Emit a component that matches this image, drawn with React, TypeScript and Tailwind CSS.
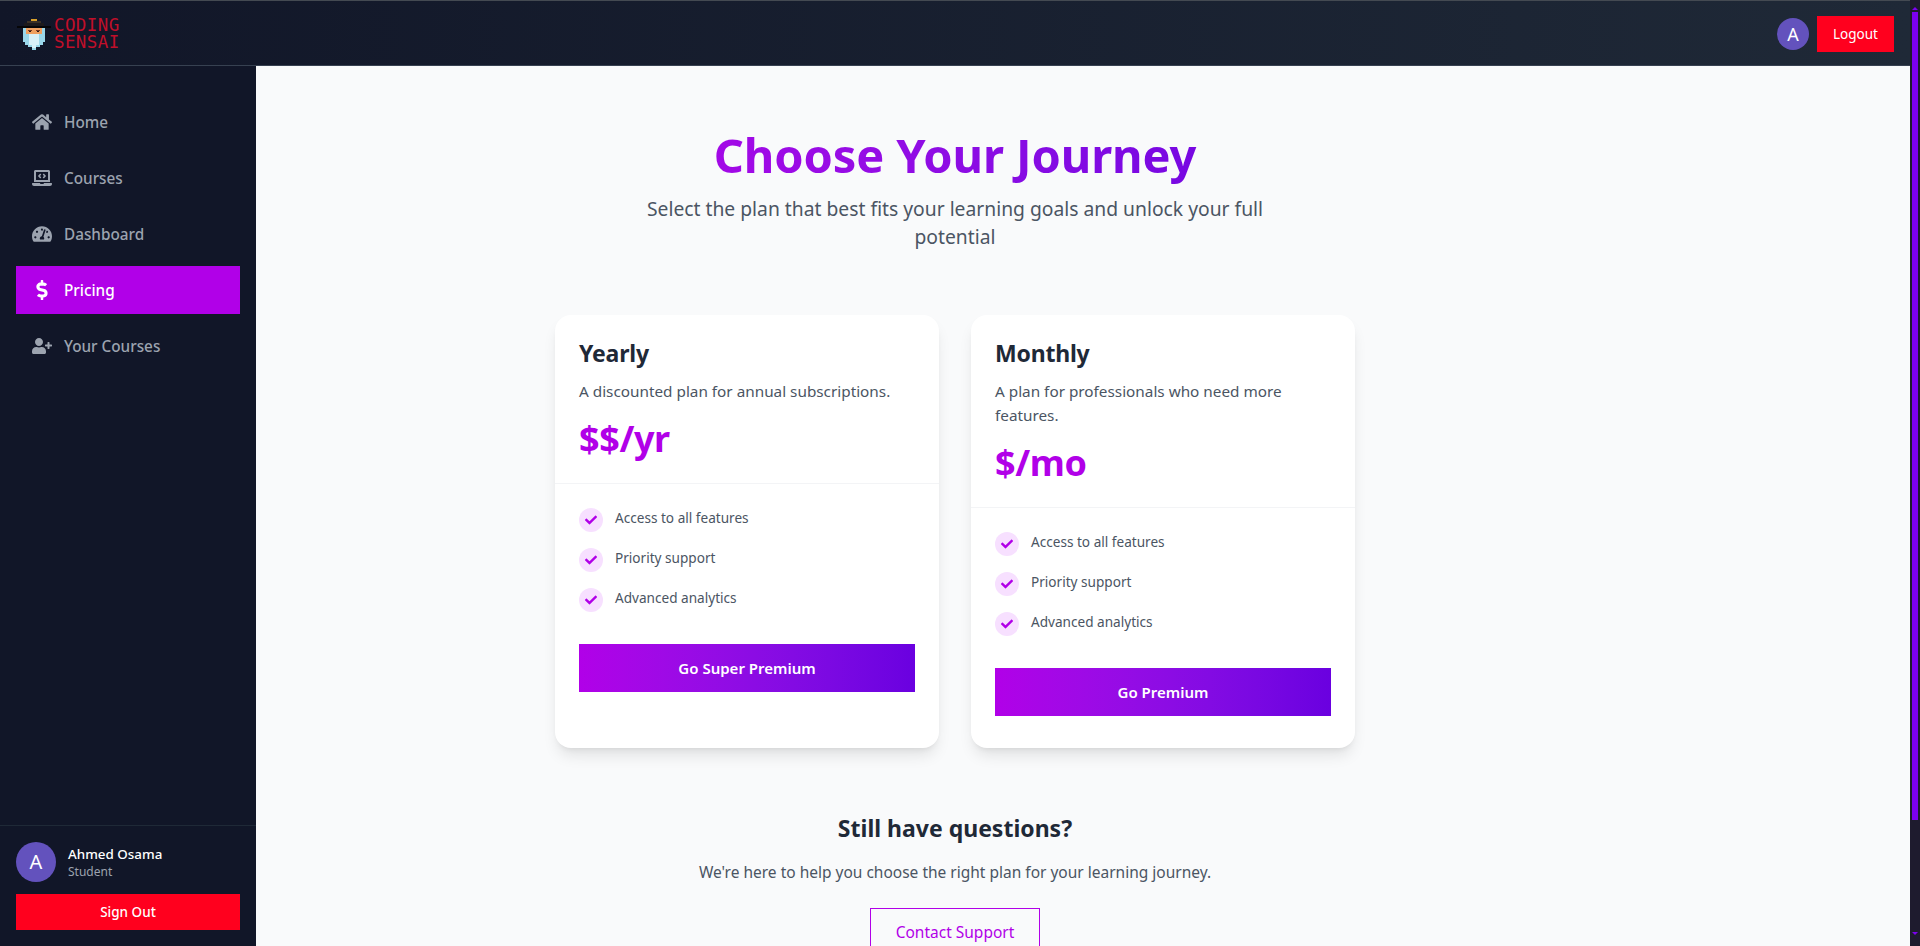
import { FaHome, FaLaptopCode, FaTachometerAlt, FaDollarSign, FaUserPlus, FaCheck } from "react-icons/fa";

const navItems = [
  { label: "Home", icon: FaHome },
  { label: "Courses", icon: FaLaptopCode },
  { label: "Dashboard", icon: FaTachometerAlt },
  { label: "Pricing", icon: FaDollarSign, active: true },
  { label: "Your Courses", icon: FaUserPlus },
];

const plans = [
  { name: "Yearly", desc: "A discounted plan for annual subscriptions.", price: "$$/yr", cta: "Go Super Premium" },
  { name: "Monthly", desc: "A plan for professionals who need more features.", price: "$/mo", cta: "Go Premium" },
];

const features = ["Access to all features", "Priority support", "Advanced analytics"];

function LogoMark() {
  return (
    <svg width="34" height="31" viewBox="0 0 34 31" shapeRendering="crispEdges" className="shrink-0">
      <rect x="14" y="0" width="6" height="2" fill="#d9a02b" />
      <rect x="10" y="2" width="14" height="2" fill="#3a3026" />
      <rect x="7" y="4" width="20" height="3" fill="#1d1a1c" />
      <rect x="0" y="7" width="34" height="2" fill="#060608" />
      <rect x="6" y="9" width="22" height="9" fill="#9ad7ea" />
      <rect x="9" y="9" width="16" height="6" fill="#f0a060" />
      <rect x="11" y="11" width="4" height="1" fill="#7a3a20" />
      <rect x="19" y="11" width="4" height="1" fill="#7a3a20" />
      <rect x="12" y="12" width="2" height="1" fill="#2a1a18" />
      <rect x="20" y="12" width="2" height="1" fill="#2a1a18" />
      <rect x="6" y="18" width="22" height="5" fill="#9ad7ea" />
      <rect x="8" y="23" width="18" height="3" fill="#9ad7ea" />
      <rect x="11" y="26" width="12" height="2" fill="#9ad7ea" />
      <rect x="15" y="28" width="4" height="3" fill="#9ad7ea" />
      <rect x="12" y="15" width="10" height="11" fill="#d8f0f8" />
      <rect x="15" y="26" width="4" height="3" fill="#d8f0f8" />
    </svg>
  );
}

function Avatar({ size }: { size: "sm" | "lg" }) {
  return (
    <div
      className={
        size === "sm"
          ? "w-8 h-8 rounded-full bg-[#6352bd] text-white flex items-center justify-center text-[18px] shrink-0"
          : "w-10 h-10 rounded-full bg-[#6352bd] text-white flex items-center justify-center text-[20px] shrink-0"
      }
    >
      A
    </div>
  );
}

function PlanCard({ plan }: { plan: (typeof plans)[number] }) {
  return (
    <div className="w-[384px] bg-white rounded-2xl shadow-[0_10px_15px_-3px_rgba(0,0,0,0.1),0_4px_6px_-4px_rgba(0,0,0,0.1)] flex flex-col pb-2">
      <div className="p-6 border-b border-gray-100">
        <h3 className="text-[23px] leading-[29px] font-bold text-[#1f2937] tracking-[-0.2px]">{plan.name}</h3>
        <p className="mt-[11px] text-[15.3px] leading-6 text-[#4b5563]">{plan.desc}</p>
        <p className="mt-4 text-[36px] leading-10 font-bold text-[#b100e8] tracking-[-0.4px]">{plan.price}</p>
      </div>
      <div className="p-6">
        <ul className="flex flex-col gap-4">
          {features.map((f) => (
            <li key={f} className="flex items-start gap-3">
              <span className="w-6 h-6 rounded-full bg-[#f7e0ff] flex items-center justify-center shrink-0">
                <FaCheck className="text-[#b100e8] text-[12px]" />
              </span>
              <span className="text-[13.6px] leading-5 text-[#4b5563]">{f}</span>
            </li>
          ))}
        </ul>
        <button className="mt-8 w-full h-12 bg-gradient-to-r from-[#b100e8] to-[#6a00e0] text-white text-[15px] font-semibold">
          {plan.cta}
        </button>
      </div>
    </div>
  );
}

export default function App() {
  return (
    <div className="h-[946px] flex overflow-hidden bg-[#1e1b2e] font-['Noto_Sans',sans-serif]">
      <div className="flex-1 min-w-0 flex flex-col">
        <div className="h-px bg-[#444a52]" />
        <header className="h-[65px] shrink-0 border-b border-[#374151] bg-gradient-to-r from-[#111628] to-[#1f2937] flex items-center justify-between pt-0.5 pl-[17px] pr-4">
          <div className="flex items-center gap-[3px]">
            <LogoMark />
            <div className="font-['DejaVu_Sans_Mono',monospace] text-[17.5px] tracking-[0.4px] text-[#c00f2a] font-light">
              <div className="h-[17px] leading-[17px]">CODING</div>
              <div className="h-[17px] leading-[17px]">SENSAI</div>
            </div>
          </div>
          <div className="flex items-center gap-2">
            <Avatar size="sm" />
            <button className="h-9 w-[77px] bg-[#ff001e] text-white text-[13.5px]">Logout</button>
          </div>
        </header>

        <div className="flex-1 min-h-0 flex">
          <aside className="w-64 shrink-0 bg-[#111628] flex flex-col">
            <nav className="flex-1 pt-8 px-4 flex flex-col gap-2">
              {navItems.map(({ label, icon: Icon, active }) => (
                <a
                  key={label}
                  className={
                    active
                      ? "h-12 flex items-center gap-3 px-4 bg-[#b100e8] text-white text-[15.3px] font-medium"
                      : "h-12 flex items-center gap-3 px-4 text-[#9ca3af] text-[15.3px] font-medium"
                  }
                >
                  <span className="w-5 flex justify-center">
                    <Icon className="text-[20px]" />
                  </span>
                  {label}
                </a>
              ))}
            </nav>
            <div className="border-t border-[#1f2937] p-4">
              <div className="flex items-center gap-3">
                <Avatar size="lg" />
                <div>
                  <p className="text-[13.4px] leading-5 font-medium text-white">Ahmed Osama</p>
                  <p className="text-[12px] leading-4 text-[#9ca3af]">Student</p>
                </div>
              </div>
              <button className="mt-3 w-full h-9 bg-[#ff001e] text-white text-[13.5px] font-medium">Sign Out</button>
            </div>
          </aside>

          <main className="flex-1 min-w-0 bg-[#f9fafb] pr-64 overflow-hidden">
            <div className="w-[800px] mx-auto pt-[59px]">
              <h1 className="text-[47px] leading-[60px] font-bold text-center bg-gradient-to-r from-[#b100e8] to-[#6a00e0] bg-clip-text text-transparent tracking-[-0.1px]">
                Choose Your Journey
              </h1>
              <p className="mt-[10px] mx-auto max-w-[640px] text-[19.3px] leading-7 text-center text-[#4b5563]">
                Select the plan that best fits your learning goals and unlock your full potential
              </p>
              <div className="mt-16 flex gap-8 items-stretch">
                {plans.map((p) => (
                  <PlanCard key={p.name} plan={p} />
                ))}
              </div>
              <div className="mt-16 text-center">
                <h2 className="text-[23px] leading-8 font-bold text-[#1f2937]">Still have questions?</h2>
                <p className="mt-4 text-[15.5px] leading-6 text-[#4b5563]">
                  We're here to help you choose the right plan for your learning journey.
                </p>
                <button className="mt-6 w-[170px] h-[50px] border border-[#b100e8] text-[#b100e8] text-[15.5px]">
                  Contact Support
                </button>
              </div>
            </div>
          </main>
        </div>
      </div>

      <div className="w-[10px] shrink-0 flex flex-col items-center bg-[#1e1b2e] pt-[7px]">
        <div className="w-0 h-0 border-x-[3px] border-x-transparent border-b-[3px] border-b-[#7c00f0]" />
        <div className="mt-[2px] w-[6px] h-[808px] bg-[#7c00f0]" />
        <div className="mt-[112px] w-0 h-0 border-x-[3px] border-x-transparent border-t-[3px] border-t-[#7c00f0]" />
      </div>
    </div>
  );
}
